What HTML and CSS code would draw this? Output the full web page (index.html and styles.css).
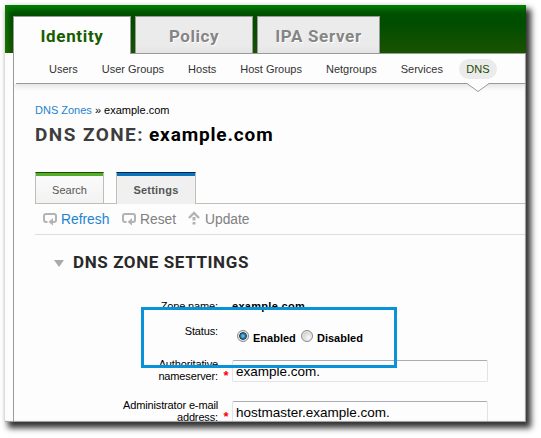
FILE: index.html
```html
<!DOCTYPE html>
<html lang="en">
<head>
<meta charset="utf-8">
<title>DNS Zone: example.com</title>
<link rel="stylesheet" href="styles.css">
</head>
<body>
<div class="window">
  <header class="banner">
    <nav class="tabs">
      <a class="tab active"><span class="t-identity">Identity</span></a>
      <a class="tab"><span class="t-policy">Policy</span></a>
      <a class="tab"><span class="t-server">IPA Server</span></a>
    </nav>
  </header>
  <div class="page">
    <nav class="subnav">
      <a>Users</a><a>User Groups</a><a>Hosts</a><a>Host Groups</a><a>Netgroups</a><a>Services</a>
      <a class="current">DNS<svg class="pointer" width="22" height="10" viewBox="0 0 22 10"><path d="M0 0.5 11 8.5 22 0.5V0H0Z" fill="#fdfdfd"/><path d="M0 0.5 11 8.5 22 0.5" fill="none" stroke="#999"/></svg></a>
    </nav>
    <main>
      <p class="crumbs"><a>DNS Zones</a> » example.com</p>
      <h1><span class="kind">DNS ZONE:</span><span class="name">example.com</span></h1>
      <nav class="facets">
        <a class="facet">Search</a>
        <a class="facet selected">Settings</a>
      </nav>
      <div class="actions">
        <a class="action refresh"><svg width="15" height="14" viewBox="0 0 15 14"><path d="M4.5 10H3Q1 10 1 8V4Q1 2 3 2H11Q13 2 13 4V8Q13 10 11 10H8" fill="none" stroke="#b3b3b3" stroke-width="2"/><path d="M10 6V13.5L5.5 10Z" fill="#b3b3b3"/></svg>Refresh</a>
        <a class="action reset"><svg width="15" height="14" viewBox="0 0 15 14"><path d="M4.5 10H3Q1 10 1 8V4Q1 2 3 2H11Q13 2 13 4V8Q13 10 11 10H8" fill="none" stroke="#b3b3b3" stroke-width="2"/><path d="M10 6V13.5L5.5 10Z" fill="#b3b3b3"/></svg>Reset</a>
        <a class="action update"><svg width="12" height="14" viewBox="0 0 12 14"><path d="M1 7 6 2 11 7" fill="none" stroke="#b3b3b3" stroke-width="2.4"/><path d="M6 6V9.5M6 11V13.5" fill="none" stroke="#b3b3b3" stroke-width="3"/></svg>Update</a>
      </div>
      <h2><i class="arrow"></i><span>DNS ZONE SETTINGS</span></h2>
      <div class="form">
        <div class="row zone"><label>Zone name:</label><i></i><b>example.com</b></div>
        <div class="row status"><label>Status:</label><i></i>
          <div class="radios"><span class="radio on"></span><b class="enabled">Enabled</b><span class="radio"></span><b>Disabled</b></div></div>
        <div class="row server"><label>Authoritative<br>nameserver:</label><i>*</i><div class="field">example.com.</div></div>
        <div class="row admin"><label>Administrator e-mail<br>address:</label><i>*</i><div class="field">hostmaster.example.com.</div></div>
      </div>
    </main>
  </div>
</div>
<div class="highlight"></div>
</body>
</html>
```
FILE: styles.css
```css
* { box-sizing: border-box; }
body { margin: 0; padding: 5px; width: 541px; height: 438px; overflow: hidden; background: #fff; font: 11px/13px "Liberation Sans", Arial, sans-serif; color: #000; }
h1, h2, p { margin: 0; }
.window { position: relative; width: 521px; height: 417px; background: #fdfdfd; box-shadow: 4px 5px 6px 1px rgba(0,0,0,.8), 0 0 4px rgba(0,0,0,.1); }
.window::after { content: ""; position: absolute; inset: 0; box-shadow: inset -1px -1px 1px #999; clip-path: inset(48px 0 0 0); }
.banner { height: 48px; padding: 11px 0 0 8px; background: linear-gradient(#008000 0, #007000 3px, #005000 8px, #004d00 18px, #1a5200 100%); box-shadow: inset 6px 0 5px -3px #167900; }
.tabs { display: flex; gap: 4px; height: 37px; }
.tab { display: flex; justify-content: center; width: 118px; border: 1px solid #999; border-bottom: 0; background: linear-gradient(#ebebeb 80%, #e3e3e3); color: #858585; font: bold 17px/38px Roboto, sans-serif; text-shadow: 1px 1px 0 #fff; white-space: nowrap; }
.tab:last-child { width: 123px; }
.tab.active { background: #fdfdfd; color: #175d00; height: 38px; position: relative; text-shadow: none; }
.t-identity { letter-spacing: .65px; }
.t-policy { letter-spacing: .55px; }
.t-server { letter-spacing: .65px; }
.page { height: 369px; margin-left: 8px; border-left: 1px solid #999; overflow: hidden; }
.subnav { position: relative; display: flex; align-items: center; gap: 24px; height: 31px; padding: 0 0 1px 35px; border-top: 1px solid; border-image: linear-gradient(90deg, transparent 117px, #999 117px) 1; background: linear-gradient(#999, #999) 2px bottom / 100% 1px no-repeat; box-shadow: 0 2px 6px #ddd; color: #333; }
.subnav a { padding-top: 2px; white-space: nowrap; }
.subnav .current { position: relative; display: flex; justify-content: center; width: 38px; height: 20px; margin-left: -8px; padding: 0; border-radius: 10px; background: #ebebeb; line-height: 20px; color: #1c4b00; }
.pointer { position: absolute; left: 8px; top: 24px; }
main { padding: 20px 0 0 21px; }
.crumbs { height: 13px; }
.crumbs a { color: #1c83d1; }
h1 { display: flex; height: 26px; margin-top: 5px; font: bold 19px/26px Roboto, sans-serif; white-space: nowrap; }
.kind { width: 114px; color: #3d3d3d; letter-spacing: 1.45px; }
.name { letter-spacing: .85px; }
.facets { display: flex; gap: 12px; height: 32px; margin-top: 24px; border-bottom: 1px solid #c0bfb5; }
.facet { height: 31px; width: 69px; border: 1px solid #c0bfb5; border-bottom: 0; border-top: 1px solid #185000; background: linear-gradient(#54ac2b 0 3px, #fbfbfb 3px, #f2f2f2); line-height: 35px; text-align: center; color: #555; }
.facet.selected { width: 80px; height: 32px; border-top-color: #00284c; background: linear-gradient(#0874be 0 3px, #f0f0f0 3px); font-weight: bold; letter-spacing: .2px; }
.actions { display: flex; height: 31px; padding: 0 0 0 8px; border-bottom: 1px solid #ddd; color: #808080; font-size: 13.8px; line-height: 31px; }
.action { display: flex; gap: 3px; }
.action svg { margin-top: 8px; flex: none; }
.refresh { width: 79px; color: #1c83d1; }
.reset { width: 66px; }
.update { gap: 5px; }
.update svg { margin-top: 7px; }
h2 { display: flex; height: 26px; margin-top: 13px; padding-left: 19px; font: bold 17px/28px Roboto, sans-serif; color: #292929; letter-spacing: .6px; white-space: nowrap; }
.arrow { width: 10px; height: 7px; margin: 12px 9px 0 0; background: #aaa; clip-path: polygon(0 0, 100% 0, 50% 100%); }
.form { margin-top: 26px; }
.row { display: grid; grid-template-columns: 183px 14px 256px; line-height: 12px; }
.row label { text-align: right; letter-spacing: -.14px; }
.row i { color: #f00; font: bold 13px/12px "Liberation Sans", sans-serif; text-align: center; padding: 12px 0 0 2px; }
.zone { height: 25px; }
.zone b { letter-spacing: .3px; }
.status { height: 33px; }
.radios { display: flex; align-items: center; height: 12px; padding-left: 5px; margin-top: 7px; }
.radio { width: 12px; height: 12px; flex: none; margin: -5px 4px 0 0; border: 1px solid #888; border-radius: 50%; background: radial-gradient(circle at 65% 65%, #fafafa, #bbb); box-shadow: inset 0 0 0 1px #eee; }
.radio.on { background: radial-gradient(circle, #54b7e0 0 1px, #163c5c 3.5px, #ddd 4.3px); }
.enabled { width: 48px; }
.server { height: 41px; }
.field { height: 22px; margin-top: 2px; padding-left: 3px; border: 1px solid #e2e2e9; border-top-color: #abadb3; border-radius: 2px; font-size: 13.5px; line-height: 21px; white-space: nowrap; }
.highlight { position: absolute; left: 141px; top: 307px; width: 256px; height: 61px; border: 3px solid #0792d9; }
```
